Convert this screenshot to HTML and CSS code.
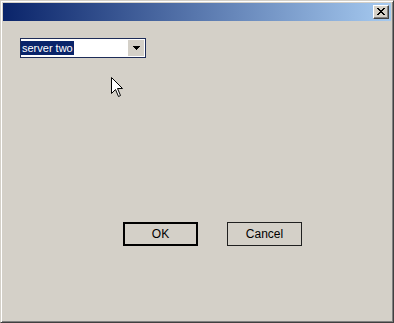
FILE: index.html
```html
<!DOCTYPE html>
<html lang="en">
<head>
    <meta charset="UTF-8">
    <title>Select server</title>
    <link rel="stylesheet" href="styles.css">
</head>
<body>

    <div class="window">
        <div class="titlebar">
            <span class="title"></span>
            <button class="close-btn" type="button">
                <svg width="8" height="7" viewBox="0 0 8 7">
                    <path d="M0 0h2v1h-2zM6 0h2v1h-2zM1 1h2v1h-2zM5 1h2v1h-2zM2 2h4v1h-4zM3 3h2v1h-2zM2 4h4v1h-4zM1 5h2v1h-2zM5 5h2v1h-2zM0 6h2v1h-2zM6 6h2v1h-2z" fill="#000"/>
                </svg>
            </button>
        </div>

        <div class="content">
            <div class="combo">
                <span class="combo-text"><span class="selected">server two</span></span>
                <span class="combo-btn">
                    <svg width="7" height="4" viewBox="0 0 7 4">
                        <path d="M0 0h7v1h-7zM1 1h5v1h-5zM2 2h3v1h-3zM3 3h1v1h-1z" fill="#000"/>
                    </svg>
                </span>
            </div>

            <div class="buttons">
                <button class="btn default" type="button">OK</button>
                <button class="btn" type="button">Cancel</button>
            </div>
        </div>

        <!-- mouse pointer -->
        <svg class="cursor" width="13" height="21" viewBox="0 0 13 21">
            <path d="M0.5 0.5 L0.5 16.5 L4.5 12.5 L7.5 19.5 L9.5 18.5 L6.5 11.5 L11.5 11.5 Z" fill="#fff" stroke="#000" stroke-width="1"/>
        </svg>
    </div>

</body>
</html>
```

FILE: styles.css
```css
html, body {
    margin: 0;
    padding: 0;
}
body {
    font-family: "Liberation Sans", Arial, sans-serif;
    font-size: 11px;
    background: #d4d0c8;
}
.window {
    position: relative;
    box-sizing: border-box;
    width: 394px;
    height: 323px;
    padding: 2px;
    background: #d4d0c8;
    border: 1px solid;
    border-color: #d4d0c8 #404040 #404040 #d4d0c8;
    box-shadow: inset 1px 1px #fff, inset -1px -1px #808080;
    display: flex;
    flex-direction: column;
}
.titlebar {
    height: 18px;
    display: flex;
    align-items: center;
    justify-content: space-between;
    padding: 0 2px 0 3px;
    background: linear-gradient(to right, #0a246a, #a6caf0);
}
.close-btn {
    width: 16px;
    height: 14px;
    padding: 0;
    margin: 0;
    background: #d4d0c8;
    border: 1px solid;
    border-color: #fff #404040 #404040 #fff;
    box-shadow: inset -1px -1px #808080;
    display: flex;
    align-items: center;
    justify-content: center;
    padding-bottom: 1px;
}
.content {
    padding: 17px 0 0 17px;
    display: flex;
    flex-direction: column;
    align-items: flex-start;
}
.combo {
    box-sizing: border-box;
    width: 126px;
    height: 20px;
    display: flex;
    align-items: stretch;
    background: #fff;
    border: 1px solid #1e2c58;
    padding: 1px 1px 1px 0;
}
.combo-text {
    flex: 1;
    display: flex;
    align-items: center;
}
.selected {
    background: #0a246a;
    color: #fff;
    padding: 0 1px 0 1px;
    line-height: 14px;
}
.combo-btn {
    box-sizing: border-box;
    width: 16px;
    background: #d4d0c8;
    display: flex;
    align-items: center;
    justify-content: center;
}
.buttons {
    margin: 164px 0 0 103px;
    display: flex;
    gap: 29px;
    align-items: flex-start;
}
.btn {
    box-sizing: border-box;
    width: 75px;
    height: 24px;
    margin: 0;
    padding: 0;
    font-family: "Liberation Sans", Arial, sans-serif;
    font-size: 12px;
    color: #000;
    background: #d4d0c8;
    border: 1px solid #202020;
}
.btn.default {
    border: 2px solid #000;
}
.cursor {
    position: absolute;
    left: 110px;
    top: 76px;
}
```
